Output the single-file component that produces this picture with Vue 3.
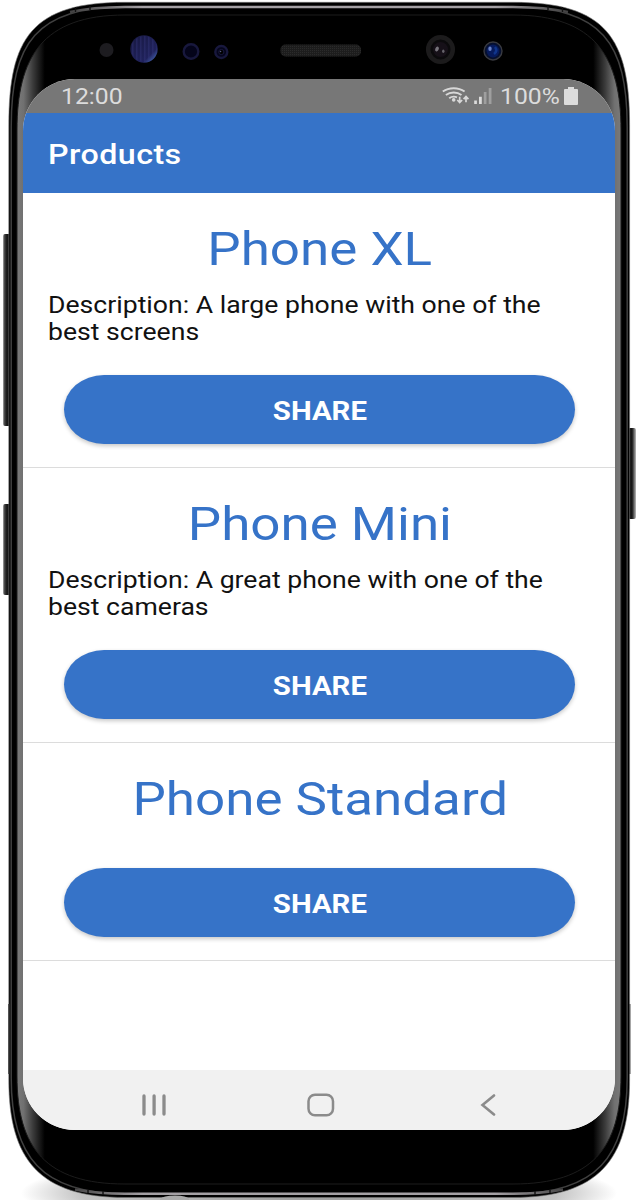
<script setup>
const products = [
  { name: 'Phone XL', lines: ['Description: A large phone with one of the', 'best screens'], cls: 'xl' },
  { name: 'Phone Mini', lines: ['Description: A great phone with one of the', 'best cameras'], cls: 'mini' },
  { name: 'Phone Standard', lines: [], cls: 'std' },
]
</script>

<template>
  <div class="device">
    <svg class="shell" viewBox="0 0 638 1200" width="638" height="1200" aria-hidden="true">
      <defs>
        <linearGradient id="glass" gradientUnits="userSpaceOnUse" x1="17" y1="0" x2="621" y2="0">
          <stop offset="0" stop-color="#7a7a7a" />
          <stop offset=".011" stop-color="#707070" />
          <stop offset=".026" stop-color="#3c3c3c" />
          <stop offset=".046" stop-color="#000" />
          <stop offset=".954" stop-color="#000" />
          <stop offset=".974" stop-color="#3c3c3c" />
          <stop offset=".989" stop-color="#707070" />
          <stop offset="1" stop-color="#7a7a7a" />
        </linearGradient>
        <linearGradient id="key" x1="0" x2="1">
          <stop offset="0" stop-color="#aaa" />
          <stop offset=".2" stop-color="#444" />
          <stop offset=".5" stop-color="#151515" />
          <stop offset="1" stop-color="#303030" />
        </linearGradient>
        <linearGradient id="keyR" x1="1" x2="0">
          <stop offset="0" stop-color="#bbb" />
          <stop offset=".3" stop-color="#555" />
          <stop offset=".5" stop-color="#151515" />
          <stop offset="1" stop-color="#222" />
        </linearGradient>
        <linearGradient id="lens" x1="0" y1="0" x2="1" y2="1">
          <stop offset="0" stop-color="#17183f" />
          <stop offset=".72" stop-color="#20225c" />
          <stop offset=".88" stop-color="#3f5ca5" />
          <stop offset="1" stop-color="#25366f" />
        </linearGradient>
        <linearGradient id="topEdge" gradientUnits="userSpaceOnUse" x1="60" y1="0" x2="578" y2="0">
          <stop offset="0" stop-color="#333" />
          <stop offset=".16" stop-color="#a4a0a4" />
          <stop offset=".84" stop-color="#a4a0a4" />
          <stop offset="1" stop-color="#333" />
        </linearGradient>
        <radialGradient id="ground">
          <stop offset="0" stop-color="#999" />
          <stop offset=".8" stop-color="#c4c4c4" />
          <stop offset="1" stop-color="#fff" />
        </radialGradient>
        <pattern id="mesh" width="2" height="2" patternUnits="userSpaceOnUse">
          <rect width="2" height="2" fill="#1d1d1d" />
          <rect width="1" height="1" fill="#2b2b2b" />
        </pattern>
        <pattern id="ribs" width="4" height="4" patternUnits="userSpaceOnUse">
          <rect width="1.5" height="4" fill="#34377a" opacity=".4" />
        </pattern>
      </defs>

      <ellipse cx="319" cy="1193" rx="298" ry="40" fill="url(#ground)" />
      <rect x="3" y="234" width="8" height="192" rx="2" fill="url(#key)" />
      <rect x="3" y="504" width="8" height="91" rx="2" fill="url(#key)" />
      <rect x="628" y="428" width="8" height="91" rx="2" fill="url(#keyR)" />

      <path d="M8.8 125C8.8 38 32 2.3 125 2.3H513C606 2.3 629.6 38 629.6 125V1080C629.6 1160 598 1197.5 513 1197.5H125C40 1197.5 8.8 1160 8.8 1080Z" fill="#000" stroke="#777" stroke-width=".6" />
      <path d="M11.2 127C11.2 43 36 7 125 7H513C602 7 627.2 43 627.2 127V1078C627.2 1157 596 1193.8 513 1193.8H125C42 1193.8 11.2 1157 11.2 1078Z" fill="none" stroke="#404040" stroke-width="1.5" />
      <path d="M70 12Q92 7.200 125 7H513Q546 7.200 568 12" fill="none" stroke="url(#topEdge)" stroke-width="2.6" />
      <path d="M75 1189.500Q98 1193.800 125 1193.800H513Q540 1193.800 563 1189.500" fill="none" stroke="url(#topEdge)" stroke-width="2.4" />
      <path d="M14 130C14 52 36 12 125 12H513C602 12 624.5 52 624.5 130V1076C624.5 1150 596 1187 513 1187H125C42 1187 14 1150 14 1076Z" fill="#000" />
      <path d="M17 130C17 58 42 15 125 15H513C596 15 621 58 621 130V1076C621 1148 592 1184 513 1184H125C46 1184 17 1148 17 1076Z" fill="url(#glass)" stroke="#1c1c1c" stroke-width="1" />
      <path d="M75.5 7V12M90 6V10M548 6V10M562.5 7V12M88 1190V1193M103 1191V1195M535 1191V1195M550 1190V1193" stroke="#111" stroke-width="1.4" />
      <path d="M8.8 1004V1074M629.8 1004V1074" stroke="#444" stroke-width="1.3" />
      <path d="M160 1199Q163 1195.5 175 1195.5T189 1199V1200H160Z" fill="#aaa" />

      <circle cx="106.5" cy="50" r="7" fill="#1d1c20" />
      <circle cx="144" cy="49" r="13.7" fill="url(#lens)" />
      <circle cx="144" cy="49" r="13" fill="url(#ribs)" />
      <circle cx="191" cy="51.5" r="7.3" fill="#04041a" stroke="#18183d" stroke-width="2.4" />
      <circle cx="221.3" cy="52" r="6" fill="#05051b" stroke="#18183d" stroke-width="2.4" />
      <circle cx="221.3" cy="52" r="2.6" fill="#000" stroke="#18183d" stroke-width="1" />
      <circle cx="220.5" cy="51.5" r=".8" fill="#555982" />
      <rect x="280.5" y="44.5" width="80.5" height="12" rx="5" fill="url(#mesh)" />
      <circle cx="440.5" cy="49.5" r="12.3" fill="#0b0a0c" stroke="#1c1b1c" stroke-width="4.5" />
      <circle cx="440.5" cy="49.5" r="7.5" fill="#161018" />
      <ellipse cx="437" cy="49" rx="1.7" ry="2.6" fill="#77747c" transform="rotate(25 437 49)" />
      <ellipse cx="443.3" cy="51.2" rx="1.2" ry="1.7" fill="#66636b" />
      <circle cx="493" cy="51" r="9" fill="#06102f" stroke="#393a40" stroke-width="1.4" />
      <circle cx="493" cy="51" r="6.4" fill="#061a5c" />
      <ellipse cx="490" cy="48.8" rx="1.7" ry="2.2" fill="#6880c4" />
      <path d="M495 47q3 4-1 7" fill="none" stroke="#10358c" stroke-width="2.5" />
    </svg>

    <div class="screen">
      <div class="status">
        <span class="t clock">12:00</span>
        <div class="status-right">
          <svg class="wifi" width="51" height="20" viewBox="0 0 51 20">
            <g fill="none" stroke="#d8d8d8" stroke-width="1.9">
              <path d="M.8 5.600A17 14.500 0 0 1 22.600 5.600M3.900 9A12 10.500 0 0 1 19.500 9M7.200 12.300A7.500 7 0 0 1 15 11.300" />
              <path d="M17.700 10.800V16M15.300 14L17.700 16.600L20.100 14M24 16.200V11M21.600 13.200L24 10.600L26.400 13.200" stroke-width="1.7" />
            </g>
            <circle cx="11.700" cy="13.900" r="1.800" fill="#d8d8d8" />
            <path d="M32.200 14.500h2.700v3.500h-2.700zM37 10.800h2.800v7.200H37z" fill="#dcdcdc" />
            <path d="M41.800 6h2.700v12h-2.700zM46.700 2h2.800v16h-2.800z" fill="#9f9f9f" />
          </svg>
          <span class="t pct">100%</span>
          <svg class="battery" width="14" height="18" viewBox="0 0 14 18">
            <path d="M4 0H10V2H13Q14 2 14 3V17Q14 18 13 18H1Q0 18 0 17V3Q0 2 1 2H4Z" fill="#dcdcdc" />
          </svg>
        </div>
      </div>

      <header class="bar"><span class="t heading">Products</span></header>

      <main class="list">
        <section v-for="p in products" :key="p.name" class="item" :class="p.cls">
          <h2 class="name"><span class="t">{{ p.name }}</span></h2>
          <p v-if="p.lines.length" class="desc">
            <span v-for="l in p.lines" :key="l" class="t">{{ l }}</span>
          </p>
          <button class="share"><span class="t">SHARE</span></button>
        </section>
      </main>

      <nav class="nav">
        <svg width="24" height="22" viewBox="0 0 24 22"><path d="M2 2V20M12.100 2V20M22 2V20" stroke="#8b8b8b" stroke-width="3.300" stroke-linecap="round" /></svg>
        <svg class="home" width="28" height="24" viewBox="0 0 28 24"><rect x="1.500" y="1.800" width="24.500" height="20.500" rx="6.500" fill="none" stroke="#8b8b8b" stroke-width="2.500" /></svg>
        <svg width="16" height="22" viewBox="0 0 16 22"><path d="M14 1.500L2.500 11L14 20.500" fill="none" stroke="#8b8b8b" stroke-width="2.600" stroke-linecap="round" stroke-linejoin="miter" /></svg>
      </nav>
    </div>
  </div>
</template>

<style>
body { margin: 0; background: #fff; }
</style>

<style scoped>
.device {
  position: relative;
  box-sizing: border-box;
  width: 638px;
  height: 1200px;
  padding: 79px 23px 0;
  overflow: hidden;
  font-family: Roboto, "Liberation Sans", sans-serif;
}
.shell { position: absolute; left: 0; top: 0; }
.screen {
  position: relative;
  display: flex;
  flex-direction: column;
  width: 592px;
  height: 1051px;
  border-radius: 52px / 52px;
  overflow: hidden;
  background: #fff;
}
.t { display: inline-block; white-space: nowrap; transform: scaleX(1.15); transform-origin: 0 50%; }
.status {
  display: flex;
  align-items: center;
  justify-content: space-between;
  height: 33.500px;
  flex: none;
  box-sizing: border-box;
  padding: 1px 37px 0 38px;
  background: #777;
  color: #dcdcdc;
  font-size: 21.500px;
  line-height: 33px;
}
.status-right { display: flex; align-items: center; }
.wifi, .battery { margin-bottom: 1px; }
.pct { width: 53px; margin: 0 11px 0 7px; }
.bar {
  flex: none;
  height: 80px;
  box-sizing: border-box;
  padding-left: 25px;
  background: #3673c8;
  color: #fff;
  font-size: 28px;
  font-weight: 500;
  line-height: 83px;
}
.heading { letter-spacing: .4px; }
.list { flex: 1; }
.item {
  box-sizing: border-box;
  height: 275.200px;
  padding: 28px 25px 0;
  border-bottom: 1.500px solid #dcdcdc;
}
.item.std { height: 217.700px; }
.name {
  margin: 0;
  height: 56px;
  padding-left: 2px;
  line-height: 56px;
  text-align: center;
  font-size: 46px;
  font-weight: 400;
  color: #3673c8;
}
.name .t, .share .t { transform-origin: 50% 50%; }
.desc { display: flex; flex-direction: column; align-items: flex-start; margin: 15px 0 0; font-size: 23.500px; line-height: 27px; color: #111; }
.desc .t { transform: scaleX(1.132); }
.share {
  display: block;
  width: 511px;
  height: 69px;
  margin: 29px 0 0 16px;
  padding: 0;
  border: 0;
  border-radius: 40px / 34.500px;
  background: #3673c8;
  box-shadow: 0 2px 4px rgba(0, 0, 0, .22);
  color: #fff;
  font: 700 25.500px/71px Roboto, "Liberation Sans", sans-serif;
}
.share .t { padding-top: 1px; }
.std .share { margin-top: 41px; }
.nav {
  display: flex;
  flex: none;
  align-items: center;
  justify-content: space-between;
  height: 60px;
  box-sizing: border-box;
  padding: 9px 119px 0 119px;
  background: #f1f1f1;
}
.home { margin: 0 4px 0 0; }
</style>
